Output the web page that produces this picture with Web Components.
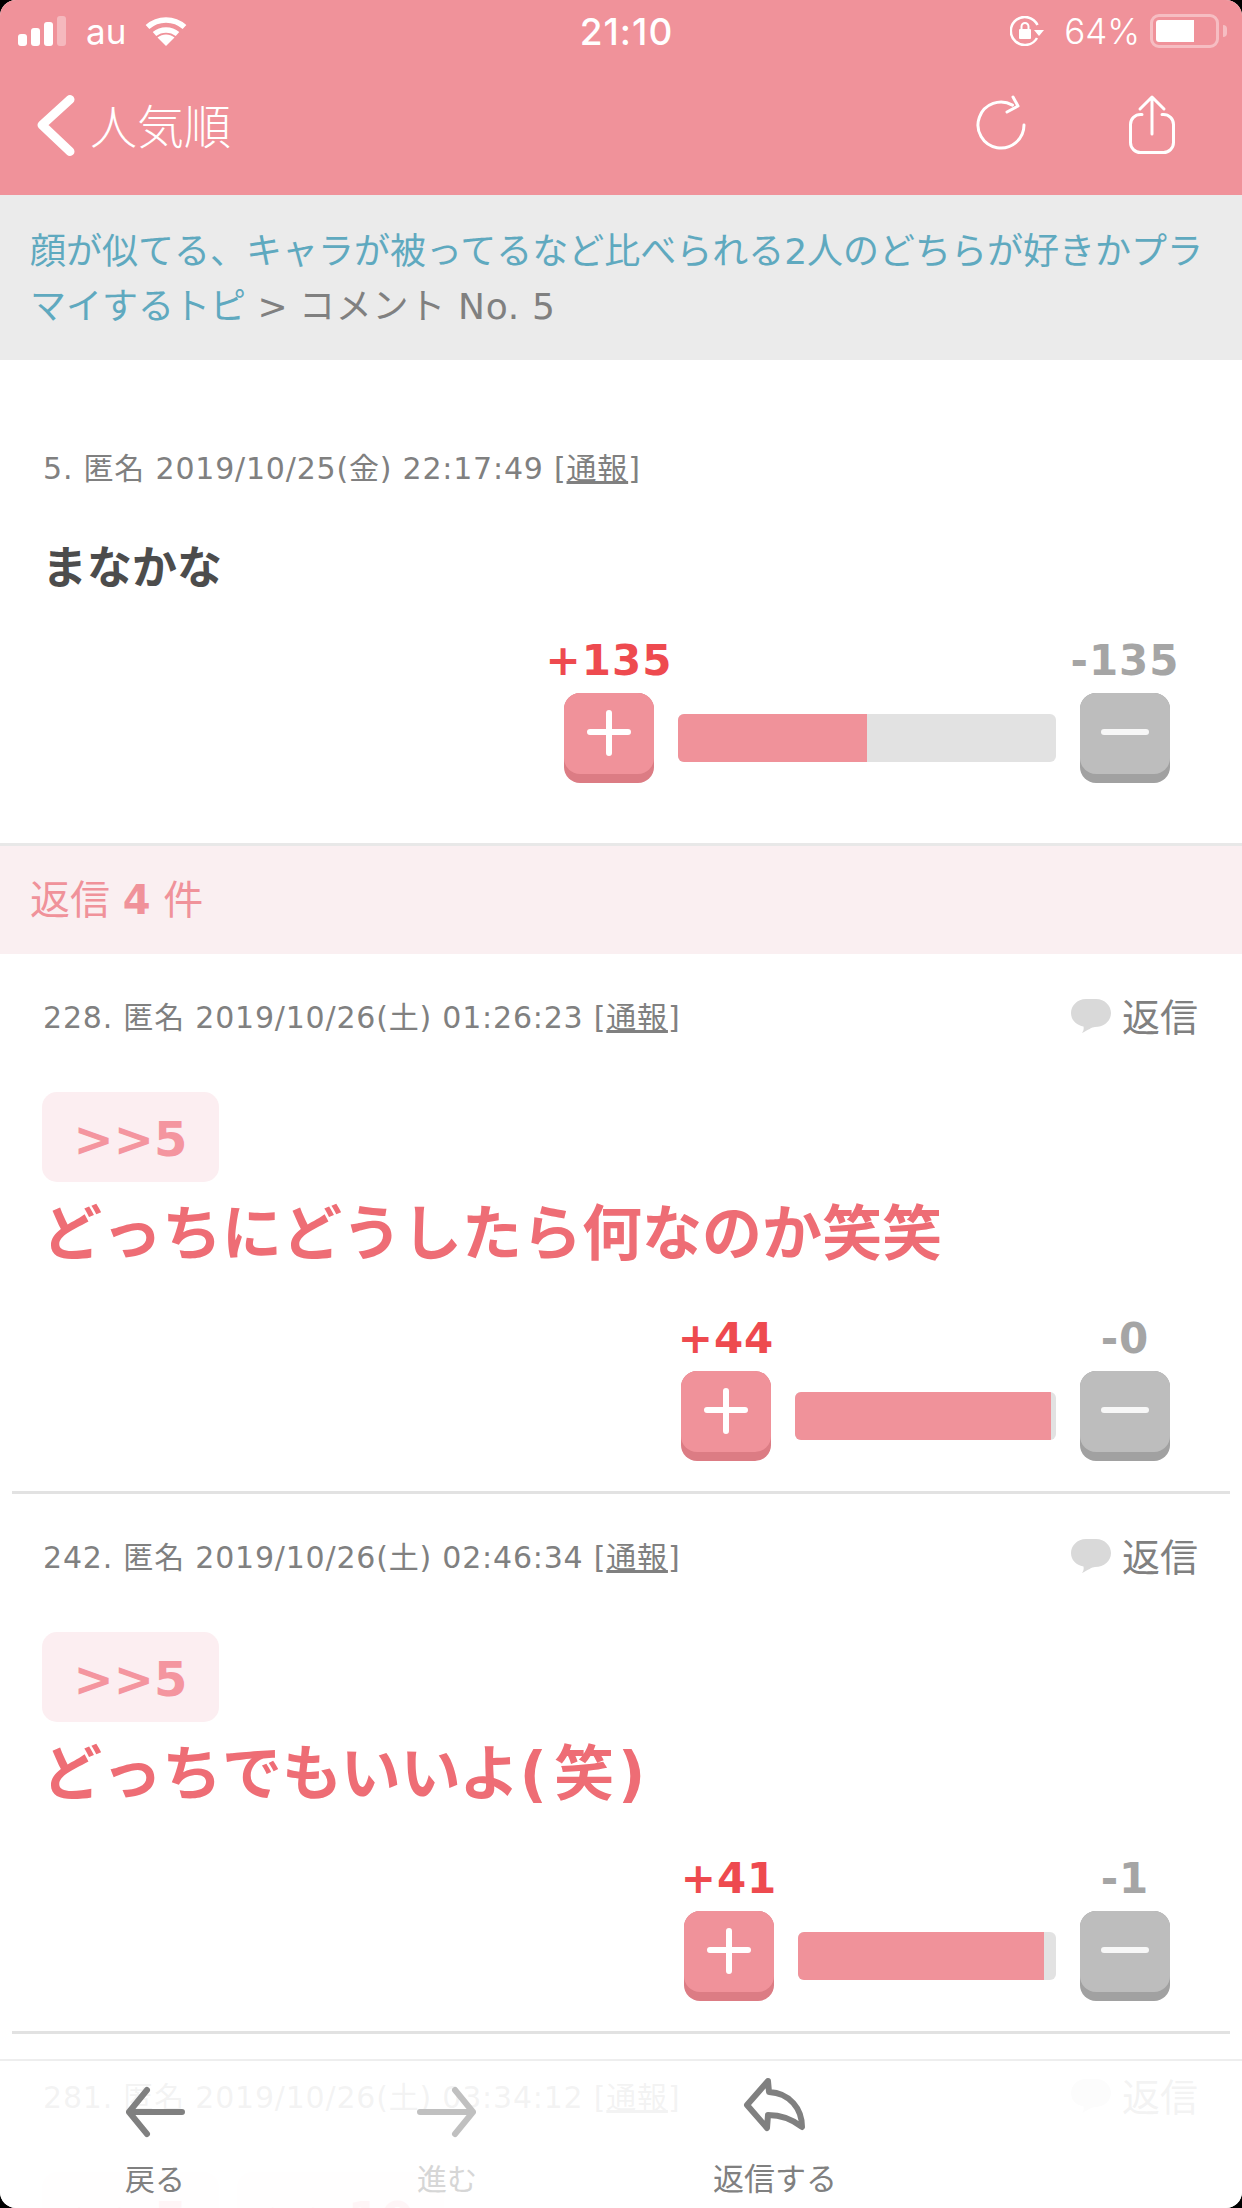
<!DOCTYPE html>
<html lang="ja">
<head>
<meta charset="utf-8">
<title>コメント No. 5</title>
<style>
    html, body { margin: 0; padding: 0; background: #000; }
    body { width: 1242px; height: 2208px; overflow: hidden; font-family: "DejaVu Sans", "Noto Sans CJK JP", sans-serif; }
</style>
</head>
<body>
<app-frame>
    <status-bar></status-bar>
    <app-header>人気順</app-header>
    <topic-crumb>
        <span slot="topic">顔が似てる、キャラが被ってるなど比べられる2人のどちらが好きかプラマイするトピ</span>
        <span slot="current">コメント No. 5</span>
    </topic-crumb>
    <res-post lead num="5" date="2019/10/25(金) 22:17:49" plus="135" minus="135" bar="378" fill="50">
        <res-text tone="plain">まなかな</res-text>
    </res-post>
    <reply-count>返信 <b>4</b> 件</reply-count>
    <res-post reply num="228" date="2019/10/26(土) 01:26:23" plus="44" minus="0" bar="261" fill="98">
        <quote-tag>&gt;&gt;5</quote-tag>
        <res-text tone="red">どっちにどうしたら何なのか笑笑</res-text>
    </res-post>
    <res-post reply num="242" date="2019/10/26(土) 02:46:34" plus="41" minus="1" bar="258" fill="95.3">
        <quote-tag>&gt;&gt;5</quote-tag>
        <res-text tone="red">どっちでもいいよ<span style="letter-spacing:7px">(</span><span style="letter-spacing:4px">笑</span>)</res-text>
    </res-post>
    <res-post reply num="281" date="2019/10/26(土) 03:34:12">
        <quote-tag>&gt;&gt;5</quote-tag>
        <quote-tag>&gt;&gt;10</quote-tag>
    </res-post>
    <bottom-nav></bottom-nav>
</app-frame>

<script>
const JP_FONT = `"DejaVu Sans", "Noto Sans CJK JP", sans-serif`;

class AppFrame extends HTMLElement {
    constructor() {
        super();
        this.attachShadow({ mode: "open" }).innerHTML = `
            <style>
                :host {
                    display: block;
                    position: relative;
                    width: 1242px;
                    height: 2208px;
                    overflow: hidden;
                    background: #fff;
                    border-radius: 16px;
                }
            </style>
            <slot></slot>
        `;
    }
}

class StatusBar extends HTMLElement {
    constructor() {
        super();
        this.attachShadow({ mode: "open" }).innerHTML = `
            <style>
                :host {
                    display: grid;
                    grid-template-columns: 1fr auto 1fr;
                    align-items: center;
                    height: 58px;
                    padding: 4px 15px 0 18px;
                    box-sizing: border-box;
                    background: #f0929a;
                    color: #fff;
                    font: 400 35px Inter, Roboto, sans-serif;
                }
                .left, .right { display: flex; align-items: center; }
                .right { justify-content: flex-end; }
                .signal { display: flex; align-items: flex-end; gap: 4px; height: 30px; }
                .signal i { display: block; width: 9px; background: #fff; border-radius: 3px; }
                .signal i:last-child { background: rgba(255,255,255,.35); }
                .carrier { margin-left: 20px; line-height: 40px; }
                .wifi { margin-left: 19px; }
                .time { font-weight: 500; font-size: 37px; letter-spacing: 1px; margin-left: 8px; }
                .lock { margin-right: 20px; }
                .pct { font-size: 35px; font-weight: 300; margin-right: 10px; }
                .battery {
                    position: relative;
                    width: 69px;
                    height: 34px;
                    box-sizing: border-box;
                    border: 3px solid rgba(255,255,255,.4);
                    border-radius: 9px;
                    padding: 3px;
                    margin-right: 8px;
                }
                .battery i { display: block; width: 38px; height: 22px; background: #fff; border-radius: 3px 0 0 3px; }
                .battery::after {
                    content: "";
                    position: absolute;
                    right: -11px;
                    top: 8px;
                    width: 4px;
                    height: 12px;
                    background: rgba(255,255,255,.4);
                    border-radius: 0 4px 4px 0;
                }
            </style>
            <div class="left">
                <div class="signal">
                    <i style="height:12px"></i><i style="height:18px"></i><i style="height:24px"></i><i style="height:30px"></i>
                </div>
                <span class="carrier">au</span>
                <svg class="wifi" width="42" height="30" viewBox="0 0 42 30" fill="none" stroke="#fff" stroke-width="5.5">
                    <path d="M2.5 11C13 1.5 29 1.5 39.500 11"/>
                    <path d="M9.500 18C16 12.500 26 12.500 32.500 18"/>
                    <path d="M21 30L12.500 21.500C17.500 17.500 24.500 17.500 29.500 21.500Z" fill="#fff" stroke="none"/>
                </svg>
            </div>
            <div class="time">21:10</div>
            <div class="right">
                <svg class="lock" width="34" height="30" viewBox="0 0 34 30" fill="none" stroke="#fff" stroke-width="2.500">
                    <path d="M27 22A14 14 0 1 1 27.500 9"/>
                    <path d="M24 14H34L29 20Z" fill="#fff" stroke="none"/>
                    <rect x="9" y="13" width="12" height="10" rx="1" fill="#fff" stroke="none"/>
                    <path d="M11.500 13V10.500A3.500 3.500 0 0 1 18.500 10.500V13" stroke-width="2"/>
                </svg>
                <span class="pct">64%</span>
                <div class="battery"><i></i></div>
            </div>
        `;
    }
}

class AppHeader extends HTMLElement {
    constructor() {
        super();
        this.attachShadow({ mode: "open" }).innerHTML = `
            <style>
                :host {
                    display: flex;
                    align-items: center;
                    justify-content: space-between;
                    height: 137px;
                    box-sizing: border-box;
                    padding: 0 64px 3px 36px;
                    background: #f0929a;
                    color: #fff;
                    font: 400 47px ${JP_FONT};
                }
                .back, .tools { display: flex; align-items: center; }
                .title { margin: -4px 0 0 14px; font-weight: 300; }
                .tools { gap: 97px; }
            </style>
            <div class="back">
                <svg width="40" height="64" viewBox="0 0 40 64" fill="none" stroke="#fff" stroke-width="9" stroke-linecap="round" stroke-linejoin="round">
                    <path d="M34 6.500L6 32L34 58.500"/>
                </svg>
                <span class="title"><slot></slot></span>
            </div>
            <div class="tools">
                <svg width="54" height="60" viewBox="0 0 54 60" fill="none" stroke="#fff" stroke-width="3" stroke-linecap="round" stroke-linejoin="round">
                    <path d="M49 30A23 23 0 1 1 37.500 10.100"/>
                    <path d="M38 2L43 11L32 17"/>
                </svg>
                <svg width="52" height="62" viewBox="0 0 52 62" fill="none" stroke="#fff" stroke-width="3" stroke-linecap="round" stroke-linejoin="round">
                    <path d="M16 20.500H14.500A10 10 0 0 0 4.500 30.500V48.500A10 10 0 0 0 14.500 58.500H37.500A10 10 0 0 0 47.500 48.500V30.500A10 10 0 0 0 37.500 20.500H36"/>
                    <path d="M26 40V3M14 15L26 3L38 15"/>
                </svg>
            </div>
        `;
    }
}

class TopicCrumb extends HTMLElement {
    constructor() {
        super();
        this.attachShadow({ mode: "open" }).innerHTML = `
            <style>
                :host {
                    display: block;
                    height: 165px;
                    box-sizing: border-box;
                    padding: 29px 30px 0;
                    background: #ebebeb;
                    color: #808080;
                    font: 400 36px/55px ${JP_FONT};
                }
                .topic { color: #5fa9bf; }
                .current { letter-spacing: .7px; }
            </style>
            <span class="topic"><slot name="topic"></slot></span> &gt; <span class="current"><slot name="current"></slot></span>
        `;
    }
}

class VoteBox extends HTMLElement {
    constructor() {
        super();
        this.attachShadow({ mode: "open" });
    }

    connectedCallback() {
        const bar = this.getAttribute("bar");
        const fill = this.getAttribute("fill");
        this.shadowRoot.innerHTML = `
            <style>
                :host {
                    display: grid;
                    grid-template-columns: 90px ${bar}px 90px;
                    column-gap: 24px;
                    justify-content: end;
                    padding-right: 72px;
                    font: 700 42px/48px ${JP_FONT};
                }
                .num { display: flex; justify-content: center; white-space: nowrap; height: 46px; padding-top: 2px; margin-bottom: 10px; letter-spacing: 1px; }
                .plus { color: #ee4a4f; grid-column: 1; }
                .minus { color: #a5a5a5; grid-column: 3; }
                .btn {
                    position: relative;
                    width: 90px;
                    height: 90px;
                    border-radius: 16px;
                    background: #dc7c84;
                }
                .btn.off { background: #a1a1a1; }
                .face { height: 81px; border-radius: 16px; background: #f0929a; display: flex; justify-content: center; padding-top: 15px; box-sizing: border-box; }
                .off .face { background: #bdbdbd; }
                .track {
                    align-self: start;
                    height: 48px;
                    margin-top: 21px;
                    background: #e2e2e2;
                    border-radius: 6px;
                    overflow: hidden;
                }
                .track i { display: block; height: 100%; width: ${fill}%; background: #f0929a; }
            </style>
            <div class="num plus">+${this.getAttribute("plus")}</div>
            <div></div>
            <div class="num minus">-${this.getAttribute("minus")}</div>
            <div class="btn">
                <div class="face">
                    <svg width="48" height="48" viewBox="0 0 48 48" stroke="#fff" stroke-width="6" stroke-linecap="round">
                        <path d="M24 5V45M5 24H43"/>
                    </svg>
                </div>
            </div>
            <div class="track"><i></i></div>
            <div class="btn off">
                <div class="face">
                    <svg width="48" height="48" viewBox="0 0 48 48" stroke="#f7f7f7" stroke-width="6" stroke-linecap="round">
                        <path d="M3 24H45"/>
                    </svg>
                </div>
            </div>
        `;
    }
}

class ResPost extends HTMLElement {
    constructor() {
        super();
        this.attachShadow({ mode: "open" });
    }

    connectedCallback() {
        const hasVote = this.hasAttribute("plus");
        const replyLink = this.hasAttribute("reply") ? `
            <div class="reply">
                <svg width="40" height="35" viewBox="0 0 40 35" fill="#d9d9d9">
                    <path d="M15 0H25C34 0 40 7 40 14C40 22 33 28 24 28C21 28 17 31 11 34C12.500 32 13 30 12.500 27.500C5 26 0 21 0 14C0 7 6 0 15 0Z"/>
                </svg>
                <span>返信</span>
            </div>` : "";
        const vote = hasVote ? `
            <vote-box plus="${this.getAttribute("plus")}" minus="${this.getAttribute("minus")}"
                bar="${this.getAttribute("bar")}" fill="${this.getAttribute("fill")}"></vote-box>` : "";
        this.shadowRoot.innerHTML = `
            <style>
                :host {
                    display: block;
                    position: relative;
                    padding: 42px 0 30px;
                    height: 540px;
                    box-sizing: border-box;
                    color: #808080;
                    font: 400 30px/44px ${JP_FONT};
                }
                :host(:not([lead]))::after {
                    content: "";
                    position: absolute;
                    left: 12px;
                    right: 12px;
                    bottom: 0;
                    height: 3px;
                    background: #e2e2e2;
                }
                :host([lead]) {
                    height: 486px;
                    padding: 87px 0 60px;
                    border-bottom: 3px solid #e8e8e8;
                }
                .meta {
                    display: flex;
                    justify-content: space-between;
                    align-items: center;
                    height: 44px;
                    padding: 0 44px 0 43px;
                    white-space: nowrap;
                    letter-spacing: .8px;
                }
                .reply { display: flex; align-items: center; gap: 11px; font-size: 38px; letter-spacing: 0; }
                .reply svg { margin-top: -3px; }
                .body {
                    display: flex;
                    flex-wrap: wrap;
                    gap: 0 18px;
                    margin: 52px 0 35px;
                    padding: 0 42px;
                }
                :host([lead]) .body { margin: 51px 0 39px; }
            </style>
            <div class="meta">
                <span>${this.getAttribute("num")}. 匿名 ${this.getAttribute("date")} [<u>通報</u>]</span>
                ${replyLink}
            </div>
            <div class="body"><slot></slot></div>
            ${vote}
        `;
    }
}

class ResText extends HTMLElement {
    constructor() {
        super();
        this.attachShadow({ mode: "open" }).innerHTML = `
            <style>
                :host {
                    display: block;
                    flex: 0 0 100%;
                    font-family: ${JP_FONT};
                    font-weight: 700;
                }
                :host([tone="plain"]) { font-size: 45px; line-height: 54px; color: #4c4c4c; }
                :host([tone="red"]) { font-size: 60px; line-height: 96px; padding-top: 4px; margin-bottom: -4px; color: #ee6d75; }
            </style>
            <slot></slot>
        `;
    }
}

class QuoteTag extends HTMLElement {
    constructor() {
        super();
        this.attachShadow({ mode: "open" }).innerHTML = `
            <style>
                :host {
                    display: inline-flex;
                    align-items: center;
                    justify-content: center;
                    min-width: 177px;
                    height: 90px;
                    box-sizing: border-box;
                    padding: 3px 30px 0;
                    border-radius: 15px;
                    background: #fceef1;
                    color: #f4959f;
                    font: 700 48px ${JP_FONT};
                }
            </style>
            <slot></slot>
        `;
    }
}

class ReplyCount extends HTMLElement {
    constructor() {
        super();
        this.attachShadow({ mode: "open" }).innerHTML = `
            <style>
                :host {
                    display: block;
                    height: 108px;
                    padding-left: 30px;
                    background: #faeff1;
                    color: #f0929a;
                    font: 400 40px/108px ${JP_FONT};
                }
            </style>
            <slot></slot>
        `;
    }
}

class NavItem extends HTMLElement {
    constructor() {
        super();
        this.attachShadow({ mode: "open" }).innerHTML = `
            <style>
                :host {
                    display: flex;
                    flex-direction: column;
                    align-items: center;
                    width: 160px;
                    font: 400 30px/40px ${JP_FONT};
                    white-space: nowrap;
                }
                ::slotted(svg) { display: block; }
            </style>
            <slot name="icon"></slot>
            <slot></slot>
        `;
    }
}

class BottomNav extends HTMLElement {
    constructor() {
        super();
        this.attachShadow({ mode: "open" }).innerHTML = `
            <style>
                :host {
                    position: absolute;
                    left: 0;
                    right: 0;
                    bottom: 0;
                    height: 149px;
                    box-sizing: border-box;
                    display: flex;
                    padding-left: 75px;
                    border-top: 2px solid #eeeeee;
                    background: rgba(255,255,255,.906);
                    color: #808080;
                }
                .back { padding-top: 25px; }
                .back svg { margin-bottom: 22px; }
                .next { margin-left: 132px; padding-top: 25px; color: #d6d6d6; }
                .next svg { margin-bottom: 22px; }
                .reply { margin-left: 168px; padding-top: 14px; }
                .reply svg { margin-bottom: 24px; }
            </style>
            <nav-item class="back">
                <svg slot="icon" width="64" height="52" viewBox="0 0 64 52" fill="none" stroke="#808080" stroke-width="6" stroke-linecap="round" stroke-linejoin="round">
                    <path d="M59 26H6M24 4L6 26L24 48"/>
                </svg>
                戻る
            </nav-item>
            <nav-item class="next">
                <svg slot="icon" width="64" height="52" viewBox="0 0 64 52" fill="none" stroke="#c0c0c0" stroke-width="6" stroke-linecap="round" stroke-linejoin="round">
                    <path d="M5 26H58M40 4L58 26L40 48"/>
                </svg>
                進む
            </nav-item>
            <nav-item class="reply">
                <svg slot="icon" width="70" height="60" viewBox="0 0 70 60" fill="none" stroke="#808080" stroke-width="6" stroke-linejoin="round">
                    <path d="M28 6L7 30L27 53L28 40C40 40 52 44 62 52C62 34 50 18 29 17Z"/>
                </svg>
                <span style="font-size:31px">返信する</span>
            </nav-item>
        `;
    }
}

customElements.define("app-frame", AppFrame);
customElements.define("status-bar", StatusBar);
customElements.define("app-header", AppHeader);
customElements.define("topic-crumb", TopicCrumb);
customElements.define("vote-box", VoteBox);
customElements.define("res-post", ResPost);
customElements.define("res-text", ResText);
customElements.define("quote-tag", QuoteTag);
customElements.define("reply-count", ReplyCount);
customElements.define("nav-item", NavItem);
customElements.define("bottom-nav", BottomNav);
</script>
</body>
</html>
